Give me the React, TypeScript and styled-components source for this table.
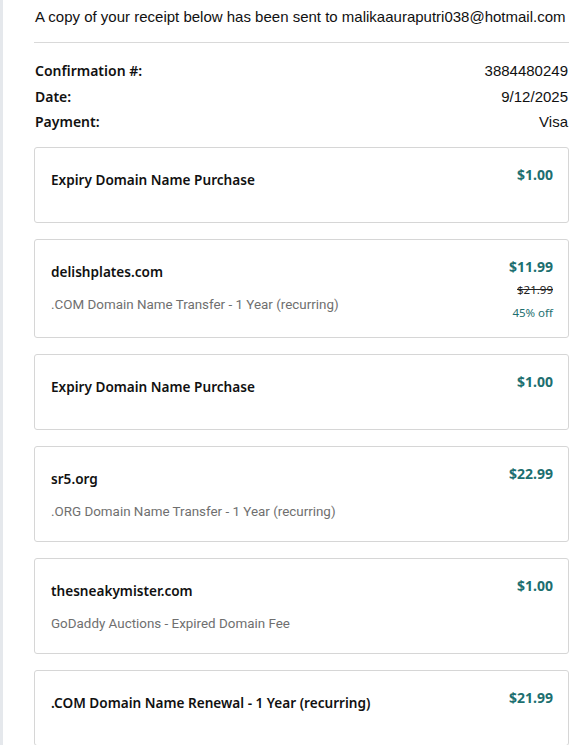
import React from "react";
import styled, { createGlobalStyle } from "styled-components";

const GlobalStyle = createGlobalStyle`
  html, body {
    margin: 0;
    padding: 0;
    background: #ffffff;
  }
  body {
    font-family: "Liberation Sans", Arial, sans-serif;
    color: #111111;
  }
`;

const Page = styled.div`
  border-left: 3px solid #e5e8ec;
  padding: 0 18px 0 31px;
  min-height: 745px;
  box-sizing: border-box;
`;

const Notice = styled.div`
  font-family: "Liberation Sans", Arial, sans-serif;
  font-size: 15px;
  line-height: 20px;
  padding: 7px 0 15px 1px;
  border-bottom: 1px solid #d9d9d9;
  color: #111;
  white-space: nowrap;
`;

const Summary = styled.div`
  display: flex;
  flex-direction: column;
  padding: 15px 1px 12px 1px;
`;

const SummaryRow = styled.div`
  display: flex;
  justify-content: space-between;
  align-items: center;
  height: 25.5px;
`;

const SummaryLabel = styled.span`
  font-family: "Noto Sans", sans-serif;
  font-weight: 600;
  font-size: 14px;
`;

const SummaryValue = styled.span`
  font-family: "Liberation Sans", Arial, sans-serif;
  font-size: 15px;
`;

const Items = styled.div`
  display: flex;
  flex-direction: column;
  gap: 16px;
`;

const Card = styled.div`
  display: flex;
  justify-content: space-between;
  align-items: flex-start;
  border: 1px solid #d6d6d6;
  border-radius: 3px;
  padding: 19px 15px 19px 16px;
`;

const Info = styled.div`
  display: flex;
  flex-direction: column;
  gap: 10px;
  padding-bottom: 10px;
`;

const Title = styled.div`
  font-family: "Noto Sans", sans-serif;
  font-weight: 600;
  font-size: 13.6px;
  line-height: 26px;
  color: #111;
`;

const Subtitle = styled.div`
  font-family: Roboto, sans-serif;
  font-size: 13.4px;
  line-height: 20px;
  color: #6f6f6f;
  margin-bottom: -10px;
`;

const Prices = styled.div`
  display: flex;
  flex-direction: column;
  align-items: flex-end;
  gap: 7px;
  margin-bottom: -3px;
`;

const Price = styled.div`
  font-family: "Noto Sans", sans-serif;
  font-weight: 700;
  font-size: 14px;
  line-height: 16px;
  color: #1d6f70;
`;

const OldPrice = styled.div`
  font-family: "Noto Sans", sans-serif;
  font-size: 11.5px;
  line-height: 16px;
  text-decoration: line-through;
  color: #222;
`;

const Discount = styled.div`
  font-family: "Noto Sans", sans-serif;
  font-size: 11.5px;
  line-height: 16px;
  color: #1d6f70;
`;

interface Item {
  title: string;
  subtitle?: string;
  price: string;
  oldPrice?: string;
  discount?: string;
}

const items: Item[] = [
  { title: "Expiry Domain Name Purchase", price: "$1.00" },
  {
    title: "delishplates.com",
    subtitle: ".COM Domain Name Transfer - 1 Year (recurring)",
    price: "$11.99",
    oldPrice: "$21.99",
    discount: "45% off",
  },
  { title: "Expiry Domain Name Purchase", price: "$1.00" },
  {
    title: "sr5.org",
    subtitle: ".ORG Domain Name Transfer - 1 Year (recurring)",
    price: "$22.99",
  },
  {
    title: "thesneakymister.com",
    subtitle: "GoDaddy Auctions - Expired Domain Fee",
    price: "$1.00",
  },
  { title: ".COM Domain Name Renewal - 1 Year (recurring)", price: "$21.99" },
];

const App: React.FunctionComponent = () => {
  return (
    <Page>
      <GlobalStyle />
      <Notice>
        A copy of your receipt below has been sent to
        malikaauraputri038@hotmail.com
      </Notice>
      <Summary>
        <SummaryRow>
          <SummaryLabel>Confirmation #:</SummaryLabel>
          <SummaryValue>3884480249</SummaryValue>
        </SummaryRow>
        <SummaryRow>
          <SummaryLabel>Date:</SummaryLabel>
          <SummaryValue>9/12/2025</SummaryValue>
        </SummaryRow>
        <SummaryRow>
          <SummaryLabel>Payment:</SummaryLabel>
          <SummaryValue>Visa</SummaryValue>
        </SummaryRow>
      </Summary>
      <Items>
        {items.map((item, i) => (
          <Card key={i}>
            <Info>
              <Title>{item.title}</Title>
              {item.subtitle && <Subtitle>{item.subtitle}</Subtitle>}
            </Info>
            <Prices>
              <Price>{item.price}</Price>
              {item.oldPrice && <OldPrice>{item.oldPrice}</OldPrice>}
              {item.discount && <Discount>{item.discount}</Discount>}
            </Prices>
          </Card>
        ))}
      </Items>
    </Page>
  );
};

export default App;
